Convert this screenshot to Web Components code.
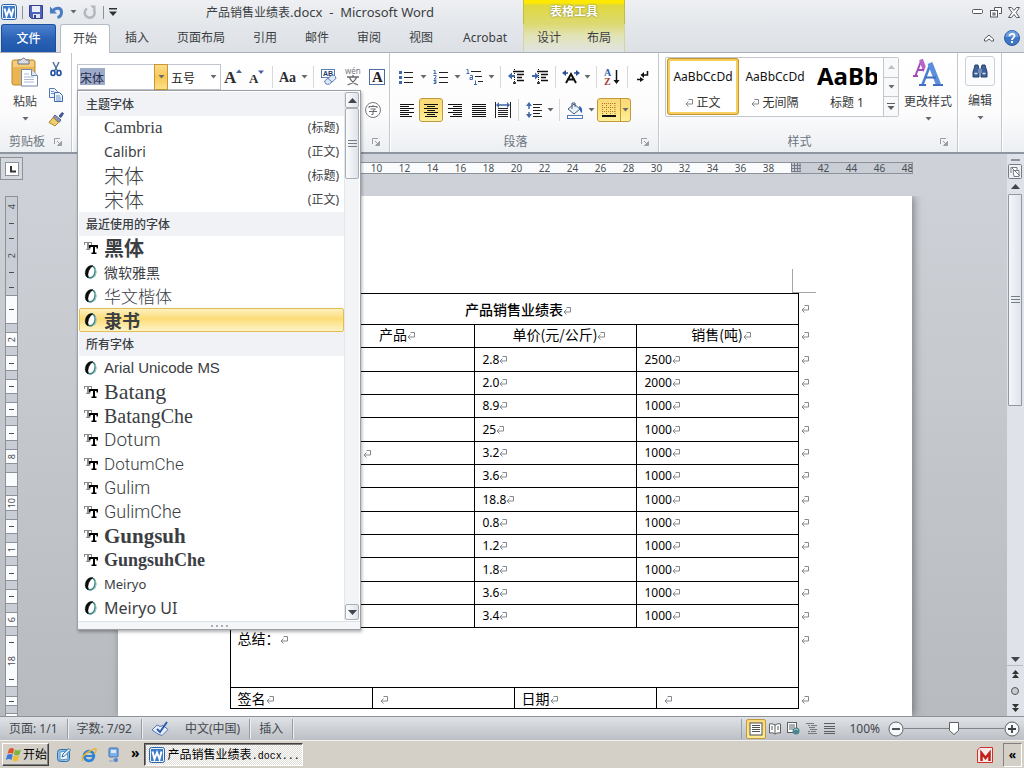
<!DOCTYPE html>
<html lang="zh-CN">
<head>
<meta charset="utf-8">
<title>产品销售业绩表.docx - Microsoft Word</title>
<style>
	html, body {
		height: 100%;
		margin: 0;
	}
	body {
		font: 12px/16px "Noto Sans", "Noto Sans CJK SC", sans-serif;
		color: #3b3e43;
		overflow: hidden;
	}
</style>
</head>
<body>
<word-app></word-app>

<script>
// inline drawings, every entry is [width, height, svg content]
const icons = {
	word: [16, 16, `<rect x=".5" y=".5" width="15" height="15" rx="2" fill="#e9f1fb" stroke="#2b62a8"/><rect x="2" y="2" width="12" height="12" fill="#3c7cc6"/><path d="M3.500 4.500l2 7.500 2.500-6.500 2.500 6.500 2-7.500" fill="none" stroke="#fff" stroke-width="2"/>`],
	save: [16, 16, `<path d="M1.500 1.500h13v13h-11l-2-2z" fill="#4f62b8" stroke="#34408a"/><rect x="4" y="2" width="8" height="6" fill="#e9eefb"/><rect x="5" y="10" width="7" height="4" fill="#dfe4f5"/><rect x="6" y="11" width="2" height="3" fill="#34408a"/>`],
	undo: [16, 16, `<path d="M4 6.500C7 3 12.500 3.500 12.500 8c0 3-2 5-4 5.500" fill="none" stroke="#4a7bc4" stroke-width="3"/><path d="M1 2.500v7h7z" fill="#4a7bc4"/>`],
	redo: [16, 16, `<path d="M5 4.500a5 5 0 1 0 6.500 1" fill="none" stroke="#b4b8be" stroke-width="2.500"/><path d="M8 1.500h5.500V7z" fill="#b4b8be"/>`],
	customize: [8, 8, `<path d="M0 0h8v1.500H0zM0 3.500h8L4 8z" fill="#2e3136"/>`],
	down: [7, 4, `<path d="M.5 0h6L3.500 3.500z" fill="#66696e"/>`],
	up: [7, 4, `<path d="M0 4h7L3.500 0z" fill="#5b5e63"/>`],
	downBig: [9, 5, `<path d="M0 0h9L4.500 5z" fill="#41444c"/>`],
	upBig: [9, 5, `<path d="M0 5h9L4.500 0z" fill="#41444c"/>`],
	upDim: [7, 4, `<path d="M0 4h7L3.500 0z" fill="#bcbfc4"/>`],
	more: [8, 7, `<path d="M0 0h8v1H0zM.5 3h7L4 7z" fill="#5b5e63"/>`],
	launcher: [8, 8, `<path d="M.5 6V.5H6" fill="none" stroke="#9a9ea5"/><path d="M3 3l3 3M7.500 3.500v4h-4z" fill="#9a9ea5" stroke="#9a9ea5"/>`],
	minimize: [12, 6, `<rect x=".5" y=".5" width="10" height="4" rx="1" fill="#fff" stroke="#55595f"/>`],
	restore: [12, 11, `<path d="M4.500 3V.5h7v6H9" fill="#fff" stroke="#55595f"/><rect x=".5" y="3.500" width="7" height="6.500" fill="#fff" stroke="#55595f"/><rect x="3" y="6" width="2" height="2" fill="#fff" stroke="#55595f"/>`],
	close: [12, 11, `<path d="M.5 .5h3L6 3.500 8.500 .5h3L8 5.500l3.500 5h-3L6 7.500l-2.500 3h-3L4 5.500z" fill="#fff" stroke="#55595f"/>`],
	collapse: [10, 8, `<path d="M.5 5L5 1l4.500 4v2L7.500 7 5 5 2.500 7H.5z" fill="#fff" stroke="#55595f"/>`],
	help: [16, 16, `<circle cx="8" cy="8" r="7.500" fill="#3f77c4" stroke="#2b5ca3"/><path d="M1.500 7a6.500 6.500 0 0 1 13 0z" fill="#6c9bdb"/><path d="M5.500 6.200C5.500 3 10.500 3 10.500 6c0 2-2.500 1.800-2.500 4" fill="none" stroke="#fff" stroke-width="1.800"/><rect x="7" y="11" width="2" height="2" fill="#fff"/>`],
	paste: [28, 30, `<rect x="1" y="3" width="23" height="25" rx="2" fill="#e9b553" stroke="#c08b2e"/><path d="M2 4h21v6H2z" fill="#f3cc7c"/><path d="M7 3h3q2.500-4 5 0h3v4H7z" fill="#d9dde3" stroke="#6d7480"/><path d="M10.500 12.500h10l6 6v10.500h-16z" fill="#fff" stroke="#7289ad"/><path d="M20.500 12.500v6h6" fill="#dbe5f3" stroke="#7289ad"/><path d="M13 17h5M13 20h10M13 22.500h10M13 25h10" stroke="#a9bad4"/>`],
	cut: [14, 16, `<path d="M4 1l4.500 9M10 1L5.500 10" stroke="#53719b" stroke-width="1.500"/><ellipse cx="4" cy="12" rx="2" ry="2.500" fill="none" stroke="#1f4fa0" stroke-width="1.600"/><ellipse cx="10" cy="12" rx="2" ry="2.500" fill="none" stroke="#1f4fa0" stroke-width="1.600"/>`],
	copy: [16, 16, `<path d="M1.500 2.500h5l3 3v6h-8z" fill="#eef4fc" stroke="#5279b5"/><path d="M6.500 6.500h5l3 3v6h-8z" fill="#eef4fc" stroke="#3c69b0"/><path d="M3 5.500h3M3 7.500h3M8 10h4M8 12h5M8 14h5" stroke="#6d94cc"/>`],
	brush: [16, 16, `<path d="M11 5l3-3.500 1.500 1L13 6.500z" fill="#4a5f9c" stroke="#3c4f86"/><path d="M7 4l6 5-2 2.500-6-5z" fill="#8f97b5" stroke="#5a628a"/><path d="M5 6.500l5.500 5L7 15l-6-3.500z" fill="#f1cf6e" stroke="#a9852c"/>`],
	grow: [18, 18, `<text x="0" y="15" font-family="Liberation Serif" font-weight="700" font-size="17" fill="#2d2f33">A</text><path d="M12 5h6l-3-3.500z" fill="#4a5fa5"/>`],
	shrink: [16, 16, `<text x="0" y="14" font-family="Liberation Serif" font-weight="700" font-size="13" fill="#2d2f33">A</text><path d="M9 1.500h6L12 5z" fill="#4a5fa5"/>`],
	changeCase: [18, 16, `<text x="0" y="13" font-family="Liberation Serif" font-weight="700" font-size="14" fill="#2d2f33">Aa</text>`],
	clearFormat: [18, 18, `<rect x="1.500" y="1.500" width="13" height="8" fill="#fff" stroke="#5a7fb5"/><text x="3" y="8" font-family="Liberation Sans" font-weight="700" font-size="7" fill="#243a66">AB</text><path d="M4.500 13l7-5.500q3-1.500 4 1t-1 3.500l-5 4q-2 1-4-.500z" fill="#dfe7f6" stroke="#5a7fb5"/><path d="M8 10.500l4 3.500" stroke="#5a7fb5"/>`],
	pinyin: [18, 18, `<text x="1" y="6" font-family="Noto Sans" font-size="8" fill="#77797d">wén</text><path d="M3 9h12M9 7v2M5.500 9.500Q8 15 14 17M12.500 9.500Q10 15 3.500 17" fill="none" stroke="#66686c" stroke-width="1.300"/>`],
	charBorder: [16, 16, `<rect x=".5" y=".5" width="15" height="15" fill="#fff" stroke="#4f6e9a"/><text x="3" y="13" font-family="Liberation Serif" font-weight="700" font-size="15" fill="#222">A</text>`],
	circled: [16, 16, `<circle cx="8" cy="8" r="7.500" fill="#fff" stroke="#77797d"/><path d="M4 6V4.500h8V6M8 3v1.500M5.500 7h5L8 9v3.500H6.500M4 9.500h8" fill="none" stroke="#66686c"/>`],
	bullets: [16, 14, `<path d="M5 2.500h9M5 7.500h9M5 12.500h9" stroke="#222"/><g fill="#3f68a8"><rect width="3" height="3" y="1"/><rect width="3" height="3" y="6"/><rect width="3" height="3" y="11"/></g>`],
	numbers: [16, 14, `<path d="M6 2.500h9M6 7.500h9M6 12.500h9" stroke="#222"/><path d="M.5 .5H2v3M.5 3.500h3M.5 5.500H3v1.500L1 9h2.500M.5 10.500H3v3H.5M1 12h2" fill="none" stroke="#3f68a8"/>`],
	multilevel: [18, 16, `<path d="M5 2.500h10M9 7.500h7M12 12.500h5" stroke="#222"/><path d="M.5 .5H2v4M.5 4.500h3M4 6.500h2.500v4H4v-2h2.500M8 15.500h3M9.500 15.500v-4" fill="none" stroke="#3f68a8"/>`],
	outdent: [16, 16, `<path d="M5 2.500h11M9 5.500h7M9 8.500h5M9 11.500h7M5 14h3" stroke="#111" stroke-width="1.500"/><path d="M6.500 0v16" stroke="#111" stroke-dasharray="1 1"/><path d="M0 7l4-3.500v2.500h3v2H4v2.500z" fill="#3f68a8"/>`],
	indent: [16, 16, `<path d="M5 2.500h11M9 5.500h7M9 8.500h5M9 11.500h7M5 14h3" stroke="#111" stroke-width="1.500"/><path d="M6.500 0v16" stroke="#111" stroke-dasharray="1 1"/><path d="M7 7L3 3.500v2.500H0v2h3v2.500z" fill="#3f68a8"/>`],
	scale: [18, 14, `<path d="M4 13L9 4l5 9M5 9.500h8" fill="none" stroke="#111" stroke-width="2"/><path d="M6 3H2M12 3h4" stroke="#2c4f94" stroke-width="1.500"/><path d="M0 3l4-3v6zM18 3l-4-3v6z" fill="#2c4f94"/>`],
	sort: [16, 18, `<text x="0" y="8" font-family="Liberation Serif" font-weight="700" font-size="10" fill="#2f5ea8">A</text><text x="0" y="17" font-family="Liberation Serif" font-weight="700" font-size="10" fill="#a23b3b">Z</text><path d="M12.500 2v12" stroke="#111" stroke-width="1.500"/><path d="M9.500 12h6l-3 4z" fill="#111"/>`],
	marks: [12, 12, `<path d="M10.500 0v4H6" fill="none" stroke="#111" stroke-width="1.500"/><path d="M7 1v6L3.500 4zM3 6v5l4-2.500z" fill="#111"/><path d="M0 8.500h4" stroke="#111" stroke-width="1.500"/>`],
	alignLeft: [14, 13, `<path d="M0 .5h14M0 2.500h9M0 4.500h14M0 6.500h9M0 8.500h14M0 10.500h9M0 12.500h12" stroke="#111"/>`],
	alignCenter: [14, 13, `<path d="M0 .5h14M3 2.500h8M0 4.500h14M3 6.500h8M0 8.500h14M3 10.500h8M1 12.500h12" stroke="#111"/>`],
	alignRight: [14, 13, `<path d="M0 .5h14M5 2.500h9M0 4.500h14M5 6.500h9M0 8.500h14M5 10.500h9M2 12.500h12" stroke="#111"/>`],
	justify: [14, 13, `<path d="M0 .5h14M0 2.500h14M0 4.500h14M0 6.500h14M0 8.500h14M0 10.500h14M0 12.500h14" stroke="#111"/>`],
	distribute: [16, 16, `<path d="M.5 0v16M15.500 0v16M3 6.500h10M3 8.500h10M3 10.500h10M3 12.500h10M3 14.500h10" stroke="#222"/><path d="M3 3h10" stroke="#3f68a8" stroke-width="1.500"/><path d="M1 3l3-3v6zM15 3l-3-3v6z" fill="#3f68a8"/>`],
	lineSpacing: [16, 16, `<path d="M7 2.500h9M7 5.500h7M7 8.500h9M7 11.500h7M7 14.500h9" stroke="#222"/><path d="M3 2v5M3 10v5" stroke="#3f68a8" stroke-width="1.500"/><path d="M0 4l3-4 3 4zM0 12l3 4 3-4z" fill="#3f68a8"/>`],
	shading: [18, 17, `<path d="M8 2l6 5-6 5-6-5z" fill="#eaf0f9" stroke="#44597d"/><path d="M6 7V1h3v4" fill="none" stroke="#44597d"/><path d="M13 4q4 1 3 7-2-1-2.500-4z" fill="#2f64b4"/><rect x="1.500" y="13.500" width="15" height="3" fill="#fff" stroke="#5279b5"/>`],
	borders: [14, 14, `<path d="M.5 0v12M4.500 0v12M8.500 0v12M13 0v12M0 .5h14M0 4.500h14M0 8.500h14" stroke="#b5762a" stroke-dasharray="1 1"/><path d="M0 13h14" stroke="#111" stroke-width="2"/>`],
	changeStyles: [30, 28, `<g fill="none" stroke-linejoin="bevel"><path d="M2.500 17.500L8.500 2" stroke="#a24db4" stroke-width="2"/><path d="M8 1.500l5.500 15" stroke="#b765c8" stroke-width="4"/><path d="M5 12h7M0 18h5" stroke="#a24db4" stroke-width="2"/><path d="M9 26.500L18 5l9 21" stroke="#fff" stroke-width="7"/><path d="M9.500 26.500L17.500 6" stroke="#4c7fd0" stroke-width="2.500"/><path d="M17 5l8.500 21.500" stroke="#5b8fdc" stroke-width="5"/><path d="M12 19.500h11M6 27h7M20 27h10" stroke="#3f6fc0" stroke-width="2"/></g>`],
	find: [16, 14, `<path d="M2 5l1-4h3l1 4v8H1V8zM9 5l1-4h3l2 7v5H9z" fill="#3f6398" stroke="#23406f"/><rect x="6" y="5" width="4" height="4" fill="#6b8cbc"/><path d="M2.500 9.500h3M10.500 9.500h3" stroke="#dbe6f5" stroke-width="1.500"/>`],
	openType: [14, 14, `<g transform="rotate(16 7 7)"><ellipse cx="7" cy="7" rx="4" ry="6" fill="#fff" stroke="#3f8484" stroke-width="1.600"/><path d="M10 2.500q4 4 1 9" fill="none" stroke="#8fc0bd"/><path d="M7 .5Q1 1.500 1.500 8q.5 5 4.500 5.500-2-3-1.500-7Q5 2.500 7 .5z" fill="#0b0b0b" stroke="#0b0b0b" stroke-width=".5"/></g>`],
	trueType: [14, 14, `<path d="M0 1h8v3H7V2H1v2H0zM3 2h2v6h1v1H2V8h1z" fill="#8b8d90"/><path d="M5 4h9v3.500h-1.500V6H11v5.500h1.500V13h-5v-1.500H9V6H6.500v1.500H5z" fill="#000"/>`],
	tabStop: [14, 14, `<rect x=".5" y=".5" width="13" height="13" fill="#fff" stroke="#8d929a"/><path d="M6 4v5.500h5" fill="none" stroke="#333" stroke-width="2"/>`],
	rulerToggle: [14, 15, `<rect x=".5" y=".5" width="13" height="14" rx="1" fill="#eef0f3" stroke="#777c84"/><path d="M3 9V3.500h6V7M5 6.500h6v6H6z" fill="#fff" stroke="#777c84"/><path d="M4 4l8 8" stroke="#777c84"/>`],
	grip: [9, 8, `<path d="M0 .5h9M0 3.500h9M0 6.500h9" stroke="#777c84"/>`],
	prevPage: [7, 8, `<path d="M0 4h7L3.500 0zM0 8h7L3.500 4z" fill="#333"/>`],
	nextPage: [7, 8, `<path d="M0 0h7L3.500 4zM0 4h7L3.500 8z" fill="#333"/>`],
	browse: [8, 8, `<circle cx="4" cy="4" r="3.500" fill="#c9cdd3" stroke="#555"/>`],
	gridMark: [10, 9, `<path d="M.5 0v9M3.500 0v9M6.500 0v9M9 0v9M0 2.500h10M0 5.500h10M0 8.500h10" stroke="#777c84"/>`],
	enter: [8, 8, `<path d="M3.500 .5h4v4.500H1M3.500 2.500L1 5l2.500 2.500" fill="none" stroke="#85888d"/>`],
	proof: [18, 16, `<path d="M1 9l5-5 3 1.500 3-1 5 4-6 6-4-1.500z" fill="#e8eefa" stroke="#5576b5"/><path d="M6 8l3 3 7-10" fill="none" stroke="#2c5cb0" stroke-width="2"/>`],
	viewPrint: [14, 14, `<rect x="1" y="1" width="12" height="12" fill="#fff" stroke="#4d4f54"/><path d="M3 3.500h8M3 5.500h8M3 7.500h8M3 9.500h8" stroke="#4d4f54"/>`],
	viewRead: [12, 12, `<path d="M6 2Q3 0 .5 1v9q3-1 5.500 1 2.500-2 5.500-1V1Q9 0 6 2v9" fill="#fff" stroke="#5b5e63"/><path d="M2 4h2M2 6h2M8 4h2M8 6h2" stroke="#5b5e63"/>`],
	viewWeb: [13, 13, `<rect x=".5" y=".5" width="9" height="10" fill="#fff" stroke="#5b5e63"/><path d="M2 3h6M2 5h6M2 7h4" stroke="#5b5e63"/><circle cx="9" cy="9" r="3.500" fill="#4a8591"/><path d="M7 8q2-2 4 0" stroke="#a8d3b4" fill="none"/>`],
	viewOutline: [11, 11, `<path d="M0 .5h8M2 2.500h2M5 2.500h6M3 4.500h6M4 6.500h7M2 8.500h2M5 8.500h5M2 10.500h9" stroke="#77797d"/>`],
	viewDraft: [11, 11, `<path d="M0 .5h11M0 3.500h11M0 5.500h11M0 8.500h11M0 10.500h11" stroke="#5b5e63"/>`],
	minus: [16, 16, `<circle cx="8" cy="8" r="7" fill="#f7f8f9" stroke="#5b5e63"/><path d="M4 8h8" stroke="#3b3e43" stroke-width="1.800"/>`],
	plus: [16, 16, `<circle cx="8" cy="8" r="7" fill="#f7f8f9" stroke="#5b5e63"/><path d="M4 8h8M8 4v8" stroke="#3b3e43" stroke-width="1.800"/>`],
	windows: [16, 15, `<path d="M3 2q3-2 5 0L7 7Q4 5 1.500 7z" fill="#e0532b"/><path d="M9 2.500q3 2 6 0L13.500 7.500q-3 2-5.500 0z" fill="#7bb53a"/><path d="M1.200 8q3-2 5.500 0L5.500 13Q3 11 0 13z" fill="#3e7bd6"/><path d="M7.700 8.500q2.500 2 5.500 0L12 13.500q-3 1.500-5.500 0z" fill="#f0bd2e"/>`],
	desktop: [16, 16, `<rect x="1.500" y="2.500" width="12" height="12" rx="3" fill="#8fc3e8" stroke="#2c6ea8"/><path d="M4 5l7-1 1 8-8 1z" fill="#f2f7fc" stroke="#5b93c4"/><path d="M6 10l1-3 6-5.500 1.500 1.500-6 6z" fill="#fff" stroke="#276bb0"/>`],
	ie: [16, 16, `<circle cx="8" cy="9" r="4.800" fill="none" stroke="#2a83d6" stroke-width="2.800"/><path d="M4 9h9" stroke="#2a83d6" stroke-width="2"/><path d="M1.500 14Q0 9 8 4.500T15 3q.5 2-2 4" fill="none" stroke="#e6b32c" stroke-width="1.500"/>`],
	computer: [14, 16, `<rect x="3" y="1" width="9" height="9" rx="1" fill="#7db1ea" stroke="#3f6fb0"/><path d="M5 3h5v3H5z" fill="#d9ebfb"/><path d="M7 10h3v3H7zM3 13h8v2H3z" fill="#a9b6c8"/><circle cx="10" cy="13" r="2" fill="#4d86cf"/>`],
	mail: [16, 16, `<path d="M3 .5h12.500v15H.5V3z" fill="#fbe9e7" stroke="#c8312c"/><path d="M4.500 14V6l4 5 4-5v8" fill="none" stroke="#c01f1c" stroke-width="2.500"/>`],
};

const svg = name => {
	const [w, h, body] = icons[name];
	return `<svg width="${w}" height="${h}" viewBox="0 0 ${w} ${h}" aria-hidden="true">${body}</svg>`;
};

const base = `
	*, :host { box-sizing: border-box; }
	button { font: inherit; color: inherit; border: 0; padding: 0; margin: 0; background: none; }
	svg { display: block; flex: none; overflow: visible; }
`;

// small helper, every element below only has to describe its template
class View extends HTMLElement {
	constructor() {
		super();
		this.shadowDOM = this.attachShadow({ mode: "open" });
	}
	connectedCallback() {
		this.shadowDOM.innerHTML = `<style>${base}${this.styles()}</style>${this.template()}`;
	}
	styles() { return ":host { display: block; }"; }
	template() { return "<slot></slot>"; }
}

class UiIcon extends View {
	styles() { return ":host { display: inline-block; }"; }
	template() { return svg(this.getAttribute("name")); }
}

class ToolButton extends View {
	styles() {
		return `
		:host { display: flex; height: 24px; flex: none; border: 1px solid transparent; border-radius: 3px; }
		:host([on]) { border-color: #c29a3c; background: linear-gradient(#fbd878, #fce27e 50%, #fdf09c); }
		.main { width: 22px; display: flex; align-items: center; justify-content: center; }
		.arrow { width: 10px; display: flex; align-items: center; justify-content: center; }
		:host([on]) .arrow { border-left: 1px solid #c29a3c; }
		`;
	}
	template() {
		const label = this.getAttribute("label");
		const arrow = this.hasAttribute("menu") ? `<button class="arrow" aria-label="${label}选项">${svg("down")}</button>` : "";
		return `<button class="main" aria-label="${label}">${svg(this.getAttribute("icon"))}</button>${arrow}`;
	}
}

class ToolRow extends View {
	styles() {
		return `
		:host { display: flex; align-items: center; height: 26px; }
		::slotted(i) { width: 1px; height: 22px; margin: 0 3px; background: #d5d8dd; }
		`;
	}
}

class BigButton extends View {
	styles() {
		return `
		button { display: flex; flex-direction: column; align-items: center; gap: 6px; line-height: 18px; }
		.pic { height: 30px; display: flex; align-items: center; justify-content: center; }
		:host([boxed]) .pic { width: 30px; border: 1px solid #cdd1d7; border-radius: 3px; background: #fbfcfd; }
		`;
	}
	template() {
		return `<button><span class="pic">${svg(this.getAttribute("icon"))}</span><slot></slot>${svg("down")}</button>`;
	}
}

class RibbonGroup extends View {
	styles() {
		return `
		:host { display: flex; flex-direction: column; flex: none; border-right: 1px solid #c3c8cf; box-shadow: 1px 0 #fff; }
		.body { flex: 1; display: flex; }
		footer { display: flex; align-items: center; height: 20px; color: #6d747e; }
		span { flex: 1; text-align: center; }
		button { width: 17px; height: 14px; }
		`;
	}
	template() {
		const label = this.getAttribute("label") || "";
		const launcher = this.hasAttribute("launcher") ? `<button aria-label="对话框">${svg("launcher")}</button>` : "";
		return `<div class="body"><slot></slot></div><footer><span>${label}</span>${launcher}</footer>`;
	}
}

class WordHeader extends View {
	styles() {
		return `
		:host {
			display: grid; grid-template: 24px 28px / auto auto 1fr;
			background: linear-gradient(#eef0f3, #e3e6ea 50%, #dde1e5); border-bottom: 1px solid #a9b0ba;
		}
		.title, .quick, .tabs, .tools, .context, .window, .help { display: flex; align-items: center; }
		.quick { gap: 5px; padding-left: 1px; }
		.quick i { width: 1px; height: 13px; background: #8e939b; }
		h1 { flex: 1; margin: 0; font: inherit; text-align: center; white-space: pre; }
		h1 span { font-size: 13px; }
		.tools { justify-content: center; font-weight: 700; color: #fff; text-shadow: 0 0 2px #6c6a2c;
			background: linear-gradient(#ffe900 3px, #e0d93c 5px, #dcd971); border: solid #c3bd3c; border-width: 0 1px; }
		.context { align-items: stretch; background: linear-gradient(#dcd971, #e2e3b4 40%, #e0e4e3); border: solid #d3d3a6; border-width: 0 1px; }
		.context button { padding: 0 13px; }
		.window, .help { justify-content: flex-end; gap: 6px; padding-right: 4px; }
		.help { gap: 10px; }
		.tabs { align-items: stretch; }
		.tabs button { padding: 0 14px; }
		.tabs .file { width: 55px; padding: 0; margin: 0 4px 0 1px; color: #fff; border: 1px solid #1d4f9d; border-bottom: 0; border-radius: 3px 3px 0 0;
			background: linear-gradient(#4c82cf, #2b62b4 50%, #1e57ab); font-weight: 500; }
		.tabs .active { padding: 0 12px; margin: 0 1px -1px 0; border: 1px solid #b6bcc5; border-bottom: 0; border-radius: 3px 3px 0 0; background: #fff; }
		.tabs .last { padding: 0 16px; }
		`;
	}
	template() {
		return `
		<div class="title">
			<div class="quick">
				<ui-icon name="word"></ui-icon><i></i>
				<button aria-label="保存">${svg("save")}</button>
				<button aria-label="撤消">${svg("undo")}</button>
				<button aria-label="撤消列表">${svg("down")}</button>
				<button aria-label="重复">${svg("redo")}</button><i></i>
				<button aria-label="自定义">${svg("customize")}</button>
			</div>
			<h1>产品销售业绩表<span>.docx  -  Microsoft Word</span></h1>
		</div>
		<div class="tools">表格工具</div>
		<div class="window">
			<button aria-label="最小化">${svg("minimize")}</button>
			<button aria-label="还原">${svg("restore")}</button>
			<button aria-label="关闭">${svg("close")}</button>
		</div>
		<nav class="tabs">
			<button class="file">文件</button><button class="active">开始</button><button>插入</button><button>页面布局</button>
			<button>引用</button><button>邮件</button><button>审阅</button><button>视图</button><button class="last">Acrobat</button>
		</nav>
		<nav class="context"><button>设计</button><button>布局</button></nav>
		<div class="help">
			<button aria-label="折叠功能区">${svg("collapse")}</button>
			<button aria-label="帮助">${svg("help")}</button>
		</div>`;
	}
}

// one line of the font list, the name is drawn in the face/size given by its attributes
class FontItem extends View {
	styles() {
		return `
		:host { display: flex; align-items: center; height: 24px; padding: 0 4px; border: 1px solid transparent; border-radius: 2px; }
		:host([on]) { border-color: #e0bd55; background: linear-gradient(#fdf0bf, #fddc76 45%, #fde48f 60%, #fdf3c6); }
		.kind { width: 20px; }
		.name { flex: 1; white-space: nowrap; font: ${this.getAttribute("face")}; line-height: 22px; }
		`;
	}
	template() {
		const kind = this.getAttribute("kind");
		return `<span class="kind">${kind ? svg(kind) : ""}</span><span class="name"><slot></slot></span><span>${this.getAttribute("use") || ""}</span>`;
	}
}

const cjk = `"Noto Sans CJK SC", sans-serif`;
const serif = `"Liberation Serif", serif`;
const fontList = [
	["主题字体", [
		["Cambria", "", `17px ${serif}`, "(标题)"],
		["Calibri", "", `14px "Noto Sans", sans-serif`, "(正文)"],
		["宋体", "", `300 20px ${cjk}`, "(标题)"],
		["宋体", "", `300 20px ${cjk}`, "(正文)"],
	]],
	["最近使用的字体", [
		["黑体", "trueType", `700 20px ${cjk}`],
		["微软雅黑", "openType", `14px ${cjk}`],
		["华文楷体", "openType", `300 17px ${cjk}`],
		["隶书", "openType", `700 18px ${cjk}`],
	]],
	["所有字体", [
		["Arial Unicode MS", "openType", `15px "Liberation Sans", sans-serif`],
		["Batang", "trueType", `22px ${serif}`],
		["BatangChe", "trueType", `20px ${serif}`],
		["Dotum", "trueType", `300 19px Roboto, sans-serif`],
		["DotumChe", "trueType", `300 17px Roboto, sans-serif`],
		["Gulim", "trueType", `300 18px Roboto, sans-serif`],
		["GulimChe", "trueType", `300 18px Roboto, sans-serif`],
		["Gungsuh", "trueType", `700 21px ${serif}`],
		["GungsuhChe", "trueType", `700 18px ${serif}`],
		["Meiryo", "openType", `13px "Noto Sans", sans-serif`],
		["Meiryo UI", "openType", `16px "Noto Sans", sans-serif`],
	]],
];

class FontMenu extends View {
	styles() {
		return `
		:host { display: block; width: 284px; background: #fff; border: 1px solid #9a9fa8; box-shadow: 1px 2px 3px rgba(0, 0, 0, .3); }
		.top { display: flex; padding: 1px 1px 0; }
		.list { flex: 1; }
		h2 { margin: 0; height: 24px; padding-left: 7px; font: 500 12px/23px ${cjk}; background: #f0f2f5; }
		.bar { width: 15px; display: flex; flex-direction: column; background: #f3f4f6; border-left: 1px solid #e4e6ea; }
		.bar button, .thumb { border: 1px solid #a9aeb7; border-radius: 2px; background: linear-gradient(90deg, #fafbfc, #dfe3e9); display: flex; align-items: center; justify-content: center; flex: none; }
		.bar button { height: 16px; }
		.thumb { height: 71px; }
		.space { flex: 1; }
		.size { height: 8px; margin-top: 1px; border-top: 1px solid #dde0e5; background: #f5f6f8; display: flex; justify-content: center; align-items: center; gap: 3px; }
		.size i { width: 2px; height: 2px; background: #a9aeb7; }
		`;
	}
	template() {
		const lists = fontList.map(([title, fonts]) => `<h2>${title}</h2>` + fonts.map(([name, kind, face, use]) =>
			`<font-item kind="${kind}" face='${face}' use="${use || ""}" ${name === "隶书" ? "on" : ""}>${name}</font-item>`).join("")).join("");
		return `
		<div class="top">
			<div class="list">${lists}</div>
			<div class="bar">
				<button aria-label="向上">${svg("upBig")}</button>
				<div class="thumb">${svg("grip")}</div>
				<div class="space"></div>
				<button aria-label="向下">${svg("downBig")}</button>
			</div>
		</div>
		<div class="size"><i></i><i></i><i></i><i></i></div>`;
	}
}

class FontCombo extends View {
	styles() {
		return `
		:host { display: flex; position: relative; width: 91px; height: 26px; flex: none; }
		input { flex: 1; min-width: 0; padding: 0 2px; border: 1px solid #c1c6ce; border-right: 0; font: 12px ${cjk}; color: #1f2c4a; outline: 0;
			background: linear-gradient(#9dabc8 0 0) 2px 3px / 25px 17px no-repeat #fff; }
		button { width: 14px; border: 1px solid #c9962f; background: linear-gradient(#fbdc8b, #f7c856 50%, #fbe08a); display: flex; align-items: center; justify-content: center; }
		font-menu { position: absolute; left: 0; top: 100%; }
		`;
	}
	template() {
		return `<input value="宋体" aria-label="字体"><button aria-label="字体列表">${svg("down")}</button><font-menu></font-menu>`;
	}
}

class SizeSelect extends View {
	styles() {
		return `
		:host { display: grid; align-items: center; width: 53px; height: 26px; flex: none; }
		select, svg { grid-area: 1 / 1; }
		select { height: 26px; padding: 0 3px; appearance: none; border: 1px solid #c1c6ce; border-left: 0; background: #fff; font: 12px ${cjk}; color: #222; }
		svg { justify-self: end; margin-right: 4px; }
		`;
	}
	template() { return `<select aria-label="字号"><option>五号</option></select>${svg("down")}`; }
}

class StyleItem extends View {
	styles() {
		return `
		:host { display: block; width: 72px; flex: none; color: #333; }
		button { width: 72px; height: 57px; padding: 0 3px; border: 3px solid transparent; display: flex; flex-direction: column; justify-content: space-between; align-items: center; border-radius: 3px; }
		:host([on]) button { border-color: #f7cf5e; outline: 1px solid #c4952f; outline-offset: -1px; }
		.sample { width: 60px; height: 32px; font: 12px/32px "Noto Sans", sans-serif; color: #111; overflow: hidden; white-space: nowrap; }
		:host([heading]) .sample { font: 700 24px/30px "Noto Sans", sans-serif; color: #000; }
		.label { display: flex; align-items: center; gap: 3px; line-height: 18px; }
		`;
	}
	template() {
		const mark = this.hasAttribute("heading") ? "" : svg("enter");
		return `<button><span class="sample">${this.getAttribute("sample")}</span><span class="label">${mark}<slot></slot></span></button>`;
	}
}

class StyleGallery extends View {
	styles() {
		return `
		:host { display: flex; height: 60px; border: 1px solid #c3c8cf; border-radius: 2px; background: #fff; padding-left: 1px; }
		.scroll { width: 15px; display: flex; flex-direction: column; border-left: 1px solid #c3c8cf; }
		.scroll button { flex: 1; display: flex; align-items: center; justify-content: center; background: #f8f9fa; }
		.scroll button + button { border-top: 1px solid #c3c8cf; }
		`;
	}
	template() {
		return `
		<style-item sample="AaBbCcDd" on>正文</style-item>
		<style-item sample="AaBbCcDd">无间隔</style-item>
		<style-item sample="AaBb" heading>标题 1</style-item>
		<div class="scroll">
			<button aria-label="上一行">${svg("upDim")}</button>
			<button aria-label="下一行">${svg("down")}</button>
			<button aria-label="其他">${svg("more")}</button>
		</div>`;
	}
}

class WordRibbon extends View {
	styles() {
		return `
		:host { display: flex; height: 101px; position: relative; z-index: 1; background: linear-gradient(#fff, #fcfcfd 60%, #eceff2); border-bottom: 2px solid #8f959e; }
		.rows { flex: 1; padding-top: 11px; display: flex; flex-direction: column; gap: 7px; }
		.clip { width: 72px; }
		.clip big-button { padding: 4px 0 0 11px; }
		.small { margin-left: auto; padding: 4px 3px 0 0; display: flex; flex-direction: column; gap: 1px; }
		.font { width: 318px; }
		.font .rows { padding-left: 5px; }
		.para { width: 269px; }
		.para .rows { padding-left: 5px; }
		.styles { width: 299px; }
		.styles style-gallery { margin: 4px 5px 0 6px; align-self: flex-start; }
		.styles big-button { padding-top: 4px; }
		.edit { width: 44px; }
		.edit big-button { padding: 3px 0 0 7px; }
		.end { justify-content: flex-end; padding-right: 4px; }
		`;
	}
	template() {
		return `
		<ribbon-group class="clip" label="剪贴板" launcher>
			<big-button icon="paste">粘贴</big-button>
			<div class="small">
				<tool-button icon="cut" label="剪切"></tool-button>
				<tool-button icon="copy" label="复制"></tool-button>
				<tool-button icon="brush" label="格式刷"></tool-button>
			</div>
		</ribbon-group>
		<ribbon-group class="font" launcher>
			<div class="rows">
				<tool-row>
					<font-combo></font-combo><size-select></size-select>
					<tool-button icon="grow" label="增大字体"></tool-button>
					<tool-button icon="shrink" label="缩小字体"></tool-button><i></i>
					<tool-button icon="changeCase" label="更改大小写" menu></tool-button><i></i>
					<tool-button icon="clearFormat" label="清除格式"></tool-button>
					<tool-button icon="pinyin" label="拼音指南"></tool-button>
					<tool-button icon="charBorder" label="字符边框"></tool-button>
				</tool-row>
				<tool-row class="end"><tool-button icon="circled" label="带圈字符"></tool-button></tool-row>
			</div>
		</ribbon-group>
		<ribbon-group class="para" label="段落" launcher>
			<div class="rows">
				<tool-row>
					<tool-button icon="bullets" label="项目符号" menu></tool-button>
					<tool-button icon="numbers" label="编号" menu></tool-button>
					<tool-button icon="multilevel" label="多级列表" menu></tool-button><i></i>
					<tool-button icon="outdent" label="减少缩进量"></tool-button>
					<tool-button icon="indent" label="增加缩进量"></tool-button><i></i>
					<tool-button icon="scale" label="中文版式" menu></tool-button><i></i>
					<tool-button icon="sort" label="排序"></tool-button><i></i>
					<tool-button icon="marks" label="编辑标记"></tool-button>
				</tool-row>
				<tool-row>
					<tool-button icon="alignLeft" label="左对齐"></tool-button>
					<tool-button icon="alignCenter" label="居中" on></tool-button>
					<tool-button icon="alignRight" label="右对齐"></tool-button>
					<tool-button icon="justify" label="两端对齐"></tool-button>
					<tool-button icon="distribute" label="分散对齐"></tool-button><i></i>
					<tool-button icon="lineSpacing" label="行距" menu></tool-button><i></i>
					<tool-button icon="shading" label="底纹" menu></tool-button>
					<tool-button icon="borders" label="边框" menu on></tool-button>
				</tool-row>
			</div>
		</ribbon-group>
		<ribbon-group class="styles" label="样式" launcher>
			<style-gallery></style-gallery>
			<big-button icon="changeStyles">更改样式</big-button>
		</ribbon-group>
		<ribbon-group class="edit"><big-button icon="find" boxed>编辑</big-button></ribbon-group>`;
	}
}

class PageRuler extends View {
	styles() {
		return `
		:host { display: flex; width: 796px; height: 12px; font-size: 10px; line-height: 10px; border: 1px solid #8d929a; background: #c9ced6; color: #4a4d52; overflow: hidden; }
		.margin { width: 119px; flex: none; }
		.text { width: 554px; flex: none; padding-right: 8px; display: flex; justify-content: flex-end; background: #fafbfc; }
		.rest { flex: 1; min-width: 0; display: flex; }
		span { width: 28px; flex: none; text-align: center; }
		svg { margin-right: 9px; }
		`;
	}
	template() {
		const numbers = (from, to) => {
			let out = "";
			for (let n = from; n <= to; n += 2) out += `<span>${n}</span>`;
			return out;
		};
		return `<div class="margin"></div><div class="text">${numbers(10, 38)}</div><div class="rest">${svg("gridMark")}${numbers(42, 48)}</div>`;
	}
}

class SideRuler extends View {
	styles() {
		return `
		:host { display: flex; flex-direction: column; width: 13px; overflow: hidden; border: 1px solid #8d929a; border-bottom: 0; background: #fafbfc; font-size: 9px; color: #4a4d52; }
		div { flex: none; display: flex; flex-direction: column; align-items: center; justify-content: space-around; line-height: 11px; }
		.gray { background: #c9ced6; border-bottom: 1px solid #8d929a; }
		.gray + div { border-bottom: 1px solid #8d929a; }
		span { writing-mode: vertical-rl; rotate: 180deg; }
		b { width: 5px; height: 1px; background: #4a4d52; }
		`;
	}
	template() {
		const part = (type, height, marks) => `<div class="${type}" style="height:${height}px">${marks.map(m => m === "-" ? "<b></b>" : `<span>${m}</span>`).join("")}</div>`;
		const rows = ["2", "-", "-", "-", "-", "8", "", "10", "-", "1", "-", "-", "6"];
		return part("gray", 99, ["4", "-", "-", "2", "-", "-"]) + part("white", 28, ["-"])
			+ rows.map((m, i) => part("gray", 9, []) + part("white", i % 3 === 1 ? 15 : 14, m ? [m] : [])).join("")
			+ part("gray", 9, []) + part("white", 51, ["-", "18", "-"]) + part("gray", 10, []) + part("white", 9, ["-"]) + part("gray", 8, []);
	}
}

class SalesTable extends View {
	styles() {
		return `
		table { width: 585px; table-layout: fixed; border-collapse: collapse; color: #000; font: 14px/20px ${cjk}; }
		td, th { height: 23px; padding: 0 8px; border: 1px solid #000; font-weight: 400; text-align: left; white-space: nowrap; }
		td { font-size: 12px; font-family: "Noto Sans", ${cjk}; }
		th { text-align: center; line-height: 18px; vertical-align: top; }
		.title th { height: 31px; font-weight: 500; vertical-align: middle; }
		.tall td { height: 24px; }
		.note td, .sign td { font: 14px/20px ${cjk}; padding-left: 7px; vertical-align: top; }
		.note td { height: 60px; }
		.sign td { height: 21px; }
		.blank { font-size: 14px; line-height: 20px; }
		td.end, .note td.end, .sign td.end { padding: 0 0 0 2px; border: 0; }
		/* paragraph marks hang after the text and take no room of their own */
		i { display: inline-block; width: 0; }
		`;
	}
	template() {
		const mark = `<i>${svg("enter")}</i>`;
		const end = `<td class="end">${mark}</td>`;
		const rows = [["2.8", "2500"], ["2.0", "2000"], ["8.9", "1000"], ["25", "1000"], ["3.2", "1000"], ["3.6", "1000"],
			["18.8", "1000"], ["0.8", "1000"], ["1.2", "1000"], ["1.8", "1000"], ["3.6", "1000"], ["3.4", "1000"]];
		const body = rows.map(([price, sold], i) => `
			<tr class="${i % 3 === 0 ? "tall" : ""}"><td></td><td class="blank" colspan="2">${i === 4 ? "\u3000\u3000\u3000" + mark : ""}</td>
			<td colspan="2">${price}${mark}</td><td colspan="2">${sold}${mark}</td>${end}</tr>`).join("");
		return `
		<table>
			<colgroup>${[82, 60, 102, 40, 122, 20, 142, 17].map(w => `<col style="width:${w}px">`).join("")}</colgroup>
			<tr class="title"><th colspan="7">产品销售业绩表${mark}</th>${end}</tr>
			<tr><th></th><th colspan="2">产品${mark}</th><th colspan="2">单价(元/公斤)${mark}</th><th colspan="2">销售(吨)${mark}</th>${end}</tr>
			${body}
			<tr class="note"><td colspan="7">总结：${mark}</td>${end}</tr>
			<tr class="sign"><td colspan="2">签名${mark}</td><td colspan="2">${mark}</td><td colspan="2">日期${mark}</td><td>${mark}</td>${end}</tr>
		</table>`;
	}
}

class WordWorkspace extends View {
	styles() {
		return `
		:host { display: grid; grid-template: 42px 1fr / 22px 1fr 17px; flex: 1; min-height: 0; overflow: hidden;
			background: linear-gradient(#cfd3d9, #c6c9ce 40%, #b7babf); }
		.corner { width: 23px; height: 23px; margin-top: 3px; display: flex; align-items: center; justify-content: center; border: 1px solid #8d929a; background: #d4d8dd; }
		.ruler { display: flex; justify-content: center; padding-top: 8px; }
		side-ruler { margin-left: 5px; }
		.doc { overflow: hidden; display: flex; justify-content: center; }
		.page { width: 794px; flex: none; height: 100%; padding-left: 112px; background: #fff; box-shadow: 2px 0 8px rgba(60, 64, 70, .55); overflow: hidden; }
		.head { height: 97px; display: flex; align-items: flex-end; justify-content: flex-end; }
		.head i { width: 24px; height: 24px; margin-right: 96px; border: solid #a4a6aa; border-width: 0 0 1px 1px; }
		.bar { grid-area: 1 / 3 / 3 / 4; display: flex; flex-direction: column; align-items: center; padding: 5px 1px 4px 0; background: #dfe3e9; gap: 3px; }
		.bar button { flex: none; }
		.split { width: 9px; height: 2px; background: #8d929a; }
		.thumb { width: 14px; height: 212px; flex: none; display: flex; align-items: center; justify-content: center; border: 1px solid #9298a1; border-radius: 1px; background: linear-gradient(90deg, #f4f6f9, #dfe4eb); }
		.up { padding: 2px 0; }
		.space { flex: 1; }
		.jump { align-self: stretch; display: flex; flex-direction: column; align-items: center; gap: 9px; border-top: 1px solid #b9bec6; padding-top: 4px; }
		`;
	}
	template() {
		return `
		<button class="corner" aria-label="制表位">${svg("tabStop")}</button>
		<div class="ruler"><page-ruler></page-ruler></div>
		<side-ruler></side-ruler>
		<main class="doc"><div class="page"><div class="head"><i></i></div><sales-table></sales-table></div></main>
		<div class="bar">
			<div class="split"></div>
			<button aria-label="标尺">${svg("rulerToggle")}</button>
			<button class="up" aria-label="向上滚动">${svg("upBig")}</button>
			<div class="thumb">${svg("grip")}</div>
			<div class="space"></div>
			<button aria-label="向下滚动">${svg("downBig")}</button>
			<div class="jump">
				<button aria-label="前一页">${svg("prevPage")}</button>
				<button aria-label="选择浏览对象">${svg("browse")}</button>
				<button aria-label="下一页">${svg("nextPage")}</button>
			</div>
		</div>`;
	}
}

const thumb = encodeURIComponent(`<svg xmlns="http://www.w3.org/2000/svg" width="10" height="13"><path d="M.5 .5h9v8L5 12.500 .5 8.500z" fill="#fff" stroke="#5b5e63"/></svg>`);

class StatusBar extends View {
	styles() {
		return `
		:host { display: flex; align-items: center; height: 24px; border-top: 1px solid #8d929a; background: linear-gradient(#dfe2e6, #cdd1d6 50%, #bcc0c6); color: #44474c; }
		.cell { height: 20px; display: flex; align-items: center; gap: 16px; padding: 0 9px; border-right: 1px solid #989da5; box-shadow: 1px 0 #eceef1; }
		.space { flex: 1; height: 20px; border-right: 1px solid #989da5; }
		.views { display: flex; align-items: center; padding-left: 4px; }
		.views button { width: 18px; height: 20px; display: flex; align-items: center; justify-content: center; }
		.views .on { width: 20px; border: 1px solid #c29a3c; border-radius: 2px; background: linear-gradient(#fbd878, #fdeb95); }
		.zoom { display: flex; align-items: center; padding-right: 4px; }
		.percent { padding: 0 8px 0 11px; }
		input { width: 100px; height: 16px; margin: 0; appearance: none; background: linear-gradient(#7f848c 0 0) center / 100% 1px no-repeat; }
		input::-webkit-slider-thumb { appearance: none; width: 10px; height: 13px; background: url("data:image/svg+xml,${thumb}") no-repeat; }
		`;
	}
	template() {
		return `
		<div class="cell">页面: 1/1</div>
		<div class="cell">字数: 7/92</div>
		<div class="cell">${svg("proof")}中文(中国)</div>
		<div class="cell">插入</div>
		<div class="space"></div>
		<div class="views">
			<button class="on" aria-label="页面视图">${svg("viewPrint")}</button>
			<button aria-label="阅读版式">${svg("viewRead")}</button>
			<button aria-label="Web 版式">${svg("viewWeb")}</button>
			<button aria-label="大纲">${svg("viewOutline")}</button>
			<button aria-label="草稿">${svg("viewDraft")}</button>
		</div>
		<div class="zoom">
			<button class="percent">100%</button>
			<button aria-label="缩小">${svg("minus")}</button>
			<input type="range" aria-label="显示比例" min="0" max="100" value="50">
			<button aria-label="放大">${svg("plus")}</button>
		</div>`;
	}
}

class TaskBar extends View {
	styles() {
		return `
		:host { display: flex; align-items: center; height: 28px; padding: 0 2px; background: #d4d0c8; border-top: 1px solid #f4f2ee; color: #000; }
		button { display: flex; align-items: center; flex: none; }
		.start { width: 47px; height: 23px; gap: 1px; padding-left: 3px; border: 1px solid; border-color: #fff #404040 #404040 #fff; box-shadow: inset -1px -1px #808080; }
		.quick { display: flex; align-items: center; gap: 9px; padding: 0 4px 0 7px; }
		.quick b { align-self: flex-start; font-size: 14px; line-height: 12px; margin-left: 2px; }
		.task { width: 159px; height: 23px; gap: 3px; padding-left: 4px; border: 1px solid; border-color: #404040 #fff #fff #404040; box-shadow: inset 1px 1px #808080;
			background: repeating-conic-gradient(#fff 0 25%, #dedbd5 0 50%) 0 0 / 2px 2px; }
		code { font: 10px "Liberation Mono", monospace; }
		.space { flex: 1; }
		.tray { width: 19px; height: 24px; margin-left: 10px; justify-content: center; border: 1px solid; border-color: #808080 #fff #fff #808080; font-weight: 700; }
		`;
	}
	template() {
		return `
		<button class="start">${svg("windows")}<span>开始</span></button>
		<div class="quick">
			<button aria-label="显示桌面">${svg("desktop")}</button>
			<button aria-label="Internet Explorer">${svg("ie")}</button>
			<button aria-label="计算机">${svg("computer")}</button><b>»</b>
		</div>
		<button class="task">${svg("word")}<span>产品销售业绩表<code>.docx...</code></span></button>
		<div class="space"></div>
		${svg("mail")}
		<button class="tray">«</button>`;
	}
}

class WordApp extends View {
	styles() { return ":host { display: flex; flex-direction: column; height: 100vh; }"; }
	template() {
		return `
		<word-header></word-header>
		<word-ribbon></word-ribbon>
		<word-workspace></word-workspace>
		<status-bar></status-bar>
		<task-bar></task-bar>`;
	}
}

customElements.define("ui-icon", UiIcon);
customElements.define("tool-button", ToolButton);
customElements.define("tool-row", ToolRow);
customElements.define("big-button", BigButton);
customElements.define("ribbon-group", RibbonGroup);
customElements.define("word-header", WordHeader);
customElements.define("font-item", FontItem);
customElements.define("font-menu", FontMenu);
customElements.define("font-combo", FontCombo);
customElements.define("size-select", SizeSelect);
customElements.define("style-item", StyleItem);
customElements.define("style-gallery", StyleGallery);
customElements.define("word-ribbon", WordRibbon);
customElements.define("page-ruler", PageRuler);
customElements.define("side-ruler", SideRuler);
customElements.define("sales-table", SalesTable);
customElements.define("word-workspace", WordWorkspace);
customElements.define("status-bar", StatusBar);
customElements.define("task-bar", TaskBar);
customElements.define("word-app", WordApp);
</script>
</body>
</html>
